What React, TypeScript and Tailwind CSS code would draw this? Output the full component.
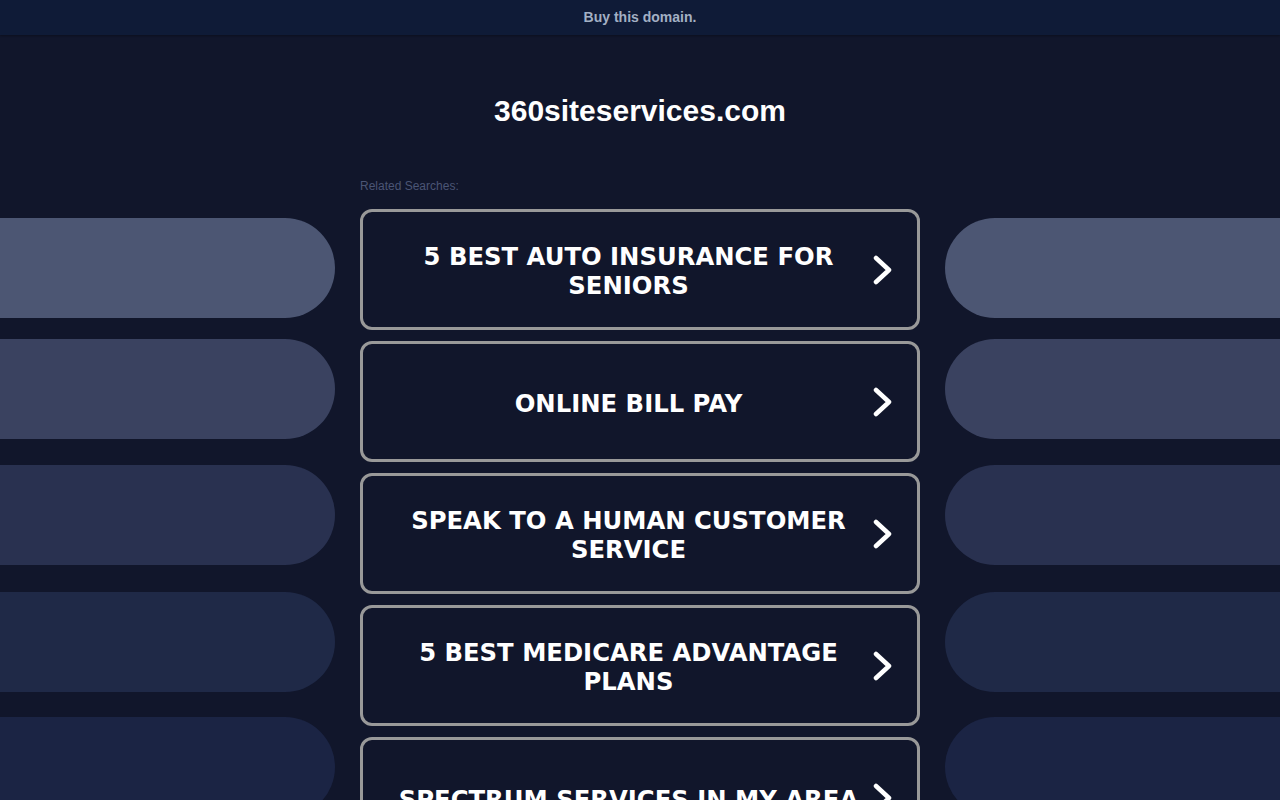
import React from "react";

const searches = [
  "5 BEST AUTO INSURANCE FOR SENIORS",
  "ONLINE BILL PAY",
  "SPEAK TO A HUMAN CUSTOMER SERVICE",
  "5 BEST MEDICARE ADVANTAGE PLANS",
  "SPECTRUM SERVICES IN MY AREA",
];

const pills = [
  { color: "bg-[#4c5673]", mt: "mt-0" },
  { color: "bg-[#3a4260]", mt: "mt-[21px]" },
  { color: "bg-[#293150]", mt: "mt-[26px]" },
  { color: "bg-[#1f2947]", mt: "mt-[27px]" },
  { color: "bg-[#1b2444]", mt: "mt-[25px]" },
];

function Chevron() {
  return (
    <svg width="22" height="30" viewBox="0 0 22 30" fill="none" className="shrink-0 ml-[8px]">
      <path d="M5 3 L18 15 L5 27" stroke="white" strokeWidth="4.5" strokeLinecap="round" strokeLinejoin="round" />
    </svg>
  );
}

function SideColumn({ side }: { side: "left" | "right" }) {
  return (
    <div className="w-[335px] shrink-0 pt-[183px] flex flex-col">
      {pills.map((p, i) => (
        <div
          key={i}
          className={`h-[100px] ${p.color} ${p.mt} ${side === "left" ? "rounded-r-full" : "rounded-l-full"}`}
        />
      ))}
    </div>
  );
}

export default function App() {
  return (
    <div className="h-[800px] overflow-hidden bg-[#11162b] font-['Liberation_Sans',Arial,sans-serif]">
      <div className="h-[35px] bg-[#0f1b37] flex items-center justify-center shadow-[0_1px_2px_rgba(0,0,0,0.3)]">
        <span className="text-[14px] font-bold text-[#a3b0c4]">Buy this domain.</span>
      </div>

      <div className="flex justify-between">
        <SideColumn side="left" />

        <div className="w-[560px] shrink-0 flex flex-col">
          <h1 className="mt-[56px] h-[40px] leading-[40px] text-center text-[30px] font-bold text-white">
            360siteservices.com
          </h1>
          <p className="mt-[47px] text-[12px] leading-[16px] text-[#4b5575]">Related Searches:</p>
          <div className="mt-[15px] flex flex-col gap-[11px]">
            {searches.map((s) => (
              <a
                key={s}
                href="#"
                className="h-[121px] border-[3px] border-[#999999] rounded-[12px] flex items-center pl-[31px] pr-[24px]"
              >
                <span className="flex-1 pt-[3px] text-center text-white font-bold text-[24.3px] leading-[29px] font-['DejaVu_Sans',Verdana,sans-serif]">
                  {s}
                </span>
                <Chevron />
              </a>
            ))}
          </div>
        </div>

        <SideColumn side="right" />
      </div>
    </div>
  );
}
